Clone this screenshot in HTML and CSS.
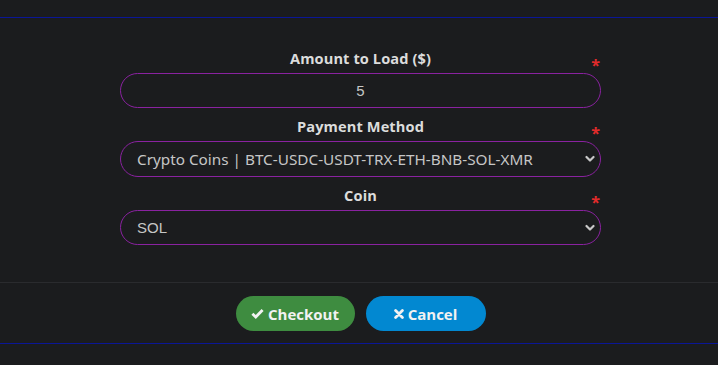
FILE: index.html
```html
<!DOCTYPE html>
<html>
<head>
<meta charset="utf-8">
<link rel="stylesheet" href="styles.css">
</head>
<body>
<div class="modal">
  <div class="modal-head"></div>
  <div class="modal-body">
    <form class="form">
      <div class="group">
        <label class="label">Amount to Load ($)</label>
        <span class="req">*</span>
        <input class="field center" type="text" value="5">
      </div>
      <div class="group">
        <label class="label">Payment Method</label>
        <span class="req">*</span>
        <div class="select-wrap">
          <select class="field select"><option>Crypto Coins | BTC-USDC-USDT-TRX-ETH-BNB-SOL-XMR</option></select>
          <svg class="chev" viewBox="0 0 10 8" width="10" height="8"><path d="M1.5 2 L5 5.5 L8.5 2" fill="none" stroke="#c8c8c8" stroke-width="2.2" stroke-linecap="round" stroke-linejoin="round"/></svg>
        </div>
      </div>
      <div class="group">
        <label class="label">Coin</label>
        <span class="req">*</span>
        <div class="select-wrap">
          <select class="field select sol"><option>SOL</option></select>
          <svg class="chev" viewBox="0 0 10 8" width="10" height="8"><path d="M1.5 2 L5 5.5 L8.5 2" fill="none" stroke="#c8c8c8" stroke-width="2.2" stroke-linecap="round" stroke-linejoin="round"/></svg>
        </div>
      </div>
    </form>
  </div>
  <div class="modal-foot">
    <button class="btn btn-green" type="button"><svg viewBox="0 0 12 10" width="13" height="11"><path d="M1.3 5.2 L4.4 8.2 L10.7 1.8" fill="none" stroke="#f2f2f2" stroke-width="2.6" stroke-linejoin="miter"/></svg>Checkout</button>
    <button class="btn btn-blue" type="button"><svg viewBox="0 0 10 10" width="10" height="10"><path d="M1.6 1.6 L8.4 8.4 M8.4 1.6 L1.6 8.4" fill="none" stroke="#f2f2f2" stroke-width="2.8" stroke-linecap="round"/></svg>Cancel</button>
  </div>
</div>
</body>
</html>
```
FILE: styles.css
```css
html, body {
  margin: 0;
  padding: 0;
  background: #1b1c1e;
  width: 718px;
  height: 365px;
  overflow: hidden;
  font-family: "Open Sans", "Noto Sans", sans-serif;
}
.modal {
  width: 718px;
}
.modal-head {
  height: 17px;
  border-bottom: 1px solid #0a1696;
}
.modal-body {
  padding: 30px 0 0 0;
  height: 234px;
  border-bottom: 1px solid #2a2b2e;
}
.form {
  width: 481px;
  margin-left: 120px;
  display: flex;
  flex-direction: column;
  gap: 8px;
}
.group {
  position: relative;
  display: flex;
  flex-direction: column;
  align-items: center;
}
.label {
  font-weight: 700;
  font-size: 14.6px;
  line-height: 21px;
  color: #dcdcdc;
  margin-bottom: 4px;
  letter-spacing: 0.1px;
}
.req {
  position: absolute;
  right: 1px;
  top: 9px;
  color: #e32b2b;
  font-weight: 700;
  font-size: 16px;
  line-height: 16px;
}
.field {
  box-sizing: border-box;
  width: 481px;
  height: 35px;
  border: 1.5px solid #8a22a0;
  border-radius: 18px;
  background: #1b1c1e;
  color: #c6c6c6;
  font-family: "Liberation Sans", Arial, sans-serif;
  font-size: 15px;
  outline: none;
  margin: 0;
}
.center {
  text-align: center;
}
.select-wrap {
  position: relative;
  width: 481px;
  height: 36px;
}
.select {
  height: 36px;
  appearance: none;
  -webkit-appearance: none;
  padding: 0 30px 0 16px;
  font-family: "Noto Sans", "Open Sans", sans-serif;
  font-size: 15.3px;
}
.select.sol {
  height: 35px;
  font-family: "Liberation Sans", Arial, sans-serif;
  font-size: 15px;
}
.chev {
  position: absolute;
  right: 6px;
  top: 14px;
}
.modal-foot {
  display: flex;
  justify-content: center;
  gap: 11px;
  padding: 13px 0 12px 3px;
  border-bottom: 1px solid #0a1696;
}
.btn {
  height: 35px;
  border: none;
  border-radius: 18px;
  color: #f2f2f2;
  font-family: "Open Sans", "Noto Sans", sans-serif;
  font-weight: 700;
  font-size: 15px;
  display: flex;
  align-items: center;
  justify-content: center;
  gap: 4px;
  padding: 0;
}
.btn-green {
  width: 119px;
  background: #3e8c40;
}
.btn-blue {
  width: 120px;
  background: #0288d1;
}
```
